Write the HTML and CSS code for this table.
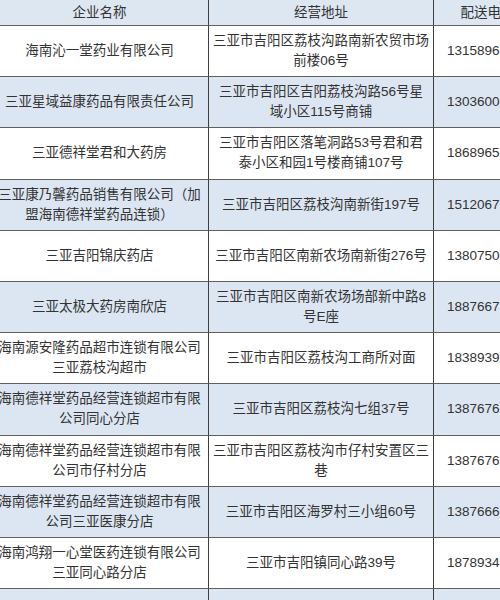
FILE: index.html
```html
<!DOCTYPE html>
<html lang="zh">
<head>
<meta charset="utf-8">
<title>药店名单</title>
<link rel="stylesheet" href="styles.css">
</head>
<body>
<div class="frame">
  <div class="list">
    <div class="row head">
      <div class="cell">企业名称</div>
      <div class="cell">经营地址</div>
      <div class="cell tel">配送电话</div>
    </div>
    <div class="row odd">
      <div class="cell">海南沁一堂药业有限公司</div>
      <div class="cell">三亚市吉阳区荔枝沟路南新农贸市场<br>前楼06号</div>
      <div class="cell tel">1315896</div>
    </div>
    <div class="row even">
      <div class="cell">三亚星域益康药品有限责任公司</div>
      <div class="cell">三亚市吉阳区吉阳荔枝沟路56号星<br>域小区115号商铺</div>
      <div class="cell tel">1303600</div>
    </div>
    <div class="row odd">
      <div class="cell">三亚德祥堂君和大药房</div>
      <div class="cell">三亚市吉阳区落笔洞路53号君和君<br>泰小区和园1号楼商铺107号</div>
      <div class="cell tel">1868965</div>
    </div>
    <div class="row even">
      <div class="cell">三亚康乃馨药品销售有限公司（加<br>盟海南德祥堂药品连锁）</div>
      <div class="cell">三亚市吉阳区荔枝沟南新街197号</div>
      <div class="cell tel">1512067</div>
    </div>
    <div class="row odd">
      <div class="cell">三亚吉阳锦庆药店</div>
      <div class="cell">三亚市吉阳区南新农场南新街276号</div>
      <div class="cell tel">1380750</div>
    </div>
    <div class="row even">
      <div class="cell">三亚太极大药房南欣店</div>
      <div class="cell">三亚市吉阳区南新农场场部新中路8<br>号E座</div>
      <div class="cell tel">1887667</div>
    </div>
    <div class="row odd">
      <div class="cell">海南源安隆药品超市连锁有限公司<br>三亚荔枝沟超市</div>
      <div class="cell">三亚市吉阳区荔枝沟工商所对面</div>
      <div class="cell tel">1838939</div>
    </div>
    <div class="row even">
      <div class="cell">海南德祥堂药品经营连锁超市有限<br>公司同心分店</div>
      <div class="cell">三亚市吉阳区荔枝沟七组37号</div>
      <div class="cell tel">1387676</div>
    </div>
    <div class="row odd">
      <div class="cell">海南德祥堂药品经营连锁超市有限<br>公司市仔村分店</div>
      <div class="cell">三亚市吉阳区荔枝沟市仔村安置区三<br>巷</div>
      <div class="cell tel">1387676</div>
    </div>
    <div class="row even">
      <div class="cell">海南德祥堂药品经营连锁超市有限<br>公司三亚医康分店</div>
      <div class="cell">三亚市吉阳区海罗村三小组60号</div>
      <div class="cell tel">1387666</div>
    </div>
    <div class="row odd">
      <div class="cell">海南鸿翔一心堂医药连锁有限公司<br>三亚同心路分店</div>
      <div class="cell">三亚市吉阳镇同心路39号</div>
      <div class="cell tel">1878934</div>
    </div>
    <div class="row even">
      <div class="cell"></div>
      <div class="cell"></div>
      <div class="cell tel"></div>
    </div>
  </div>
</div>
</body>
</html>
```

FILE: styles.css
```css
html, body {
  margin: 0;
  padding: 0;
  background: #ffffff;
}

body {
  font-family: "Liberation Sans", "Noto Sans CJK SC", sans-serif;
  font-size: 13.5px;
  color: #333333;
}

.frame {
  width: 500px;
  height: 600px;
  overflow: hidden;
}

.list {
  width: 551px;
  margin-left: -9px;
  display: flex;
  flex-direction: column;
}

.row {
  display: grid;
  grid-template-columns: 218px 225px 108px;
  height: 51.2px;
  flex: none;
}

.cell {
  box-sizing: border-box;
  display: flex;
  align-items: center;
  justify-content: center;
  text-align: center;
  white-space: nowrap;
  padding: 0 1px;
  line-height: 20px;
  border-right: 1px solid #3e3e3e;
  border-bottom: 1px solid #606060;
}

.head {
  height: 26px;
  background: #dde7f2;
}

.odd {
  background: #ffffff;
}

.even {
  background: #dce6f2;
}

.cell.tel {
  justify-content: flex-start;
  text-align: left;
  padding-left: 13px;
}

.head .cell.tel {
  justify-content: center;
  text-align: center;
  padding-left: 1px;
}
```
